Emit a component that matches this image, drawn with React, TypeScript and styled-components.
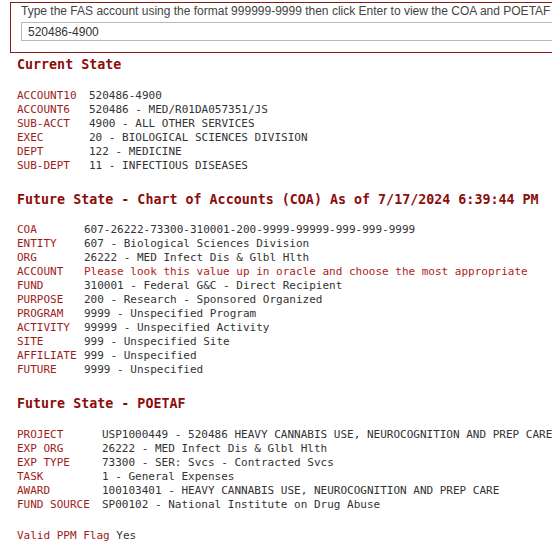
import React from "react";
import styled, { createGlobalStyle } from "styled-components";

const Global = createGlobalStyle`
  html, body { margin: 0; padding: 0; background: #fff; overflow: hidden; }
  body { font-family: "DejaVu Sans Mono", "Liberation Mono", monospace; }
`;

const Page = styled.div`
  width: 552px;
  height: 552px;
  overflow: hidden;
  padding: 2px 0 0 10px;
  box-sizing: border-box;
`;

const SearchBox = styled.div`
  width: 620px;
  border: 1px solid #8b1a1a;
  padding: 1px 10px 11px 10px;
  box-sizing: border-box;
  display: flex;
  flex-direction: column;
  gap: 3px;
  font-family: "Liberation Sans", Arial, sans-serif;
`;

const Prompt = styled.div`
  font-size: 12px;
  line-height: 15px;
  color: #444;
  white-space: nowrap;
`;

const Input = styled.input`
  height: 19px;
  box-sizing: border-box;
  border: 1px solid #b8b8b8;
  padding: 0 6px;
  font-family: "Liberation Sans", Arial, sans-serif;
  font-size: 12px;
  color: #333;
  width: 100%;
  outline: none;
`;

const Content = styled.div`
  padding-left: 7px;
`;

const Heading = styled.h2<{ $top: number; $bottom: number }>`
  margin: ${(p) => p.$top}px 0 ${(p) => p.$bottom}px 0;
  font-family: "DejaVu Sans Mono", "Liberation Mono", monospace;
  font-size: 13.33px;
  line-height: 16px;
  font-weight: bold;
  color: #8b0d0d;
  white-space: nowrap;
`;

const Table = styled.div<{ $label: number }>`
  display: grid;
  grid-template-columns: ${(p) => p.$label}px auto;
  grid-auto-rows: 14px;
  font-size: 11px;
  line-height: 14px;
  white-space: nowrap;
`;

const Label = styled.div`
  color: #9e1b1b;
`;

const Value = styled.div<{ $warn?: boolean }>`
  color: ${(p) => (p.$warn ? "#b01c1c" : "#333")};
`;

const FlagLine = styled.div`
  margin-top: 17px;
  font-size: 11px;
  line-height: 14px;
  white-space: nowrap;
`;

const FlagLabel = styled.span`
  color: #9e1b1b;
`;

const FlagValue = styled.span`
  color: #333;
`;

type Row = [string, string, boolean?];

const current: Row[] = [
  ["ACCOUNT10", "520486-4900"],
  ["ACCOUNT6", "520486 - MED/R01DA057351/JS"],
  ["SUB-ACCT", "4900 - ALL OTHER SERVICES"],
  ["EXEC", "20 - BIOLOGICAL SCIENCES DIVISION"],
  ["DEPT", "122 - MEDICINE"],
  ["SUB-DEPT", "11 - INFECTIOUS DISEASES"],
];

const coa: Row[] = [
  ["COA", "607-26222-73300-310001-200-9999-99999-999-999-9999"],
  ["ENTITY", "607 - Biological Sciences Division"],
  ["ORG", "26222 - MED Infect Dis & Glbl Hlth"],
  ["ACCOUNT", "Please look this value up in oracle and choose the most appropriate", true],
  ["FUND", "310001 - Federal G&C - Direct Recipient"],
  ["PURPOSE", "200 - Research - Sponsored Organized"],
  ["PROGRAM", "9999 - Unspecified Program"],
  ["ACTIVITY", "99999 - Unspecified Activity"],
  ["SITE", "999 - Unspecified Site"],
  ["AFFILIATE", "999 - Unspecified"],
  ["FUTURE", "9999 - Unspecified"],
];

const poetaf: Row[] = [
  ["PROJECT", "USP1000449 - 520486 HEAVY CANNABIS USE, NEUROCOGNITION AND PREP CARE"],
  ["EXP ORG", "26222 - MED Infect Dis & Glbl Hlth"],
  ["EXP TYPE", "73300 - SER: Svcs - Contracted Svcs"],
  ["TASK", "1 - General Expenses"],
  ["AWARD", "100103401 - HEAVY CANNABIS USE, NEUROCOGNITION AND PREP CARE"],
  ["FUND SOURCE", "SP00102 - National Institute on Drug Abuse"],
];

const DataTable = ({ rows, label }: { rows: Row[]; label: number }) => (
  <Table $label={label}>
    {rows.map(([l, v, w]) => (
      <React.Fragment key={l}>
        <Label>{l}</Label>
        <Value $warn={w}>{v}</Value>
      </React.Fragment>
    ))}
  </Table>
);

export default function App() {
  return (
    <>
      <Global />
      <Page>
        <SearchBox>
          <Prompt>
            Type the FAS account using the format 999999-9999 then click Enter to view the COA and POETAF results
          </Prompt>
          <Input defaultValue="520486-4900" />
        </SearchBox>
        <Content>
          <Heading $top={4} $bottom={16}>Current State</Heading>
          <DataTable rows={current} label={72} />
          <Heading $top={19} $bottom={15}>Future State - Chart of Accounts (COA) As of 7/17/2024 6:39:44 PM</Heading>
          <DataTable rows={coa} label={67} />
          <Heading $top={19} $bottom={16}>Future State - POETAF</Heading>
          <DataTable rows={poetaf} label={85} />
          <FlagLine>
            <FlagLabel>Valid PPM Flag</FlagLabel> <FlagValue>Yes</FlagValue>
          </FlagLine>
        </Content>
      </Page>
    </>
  );
}
